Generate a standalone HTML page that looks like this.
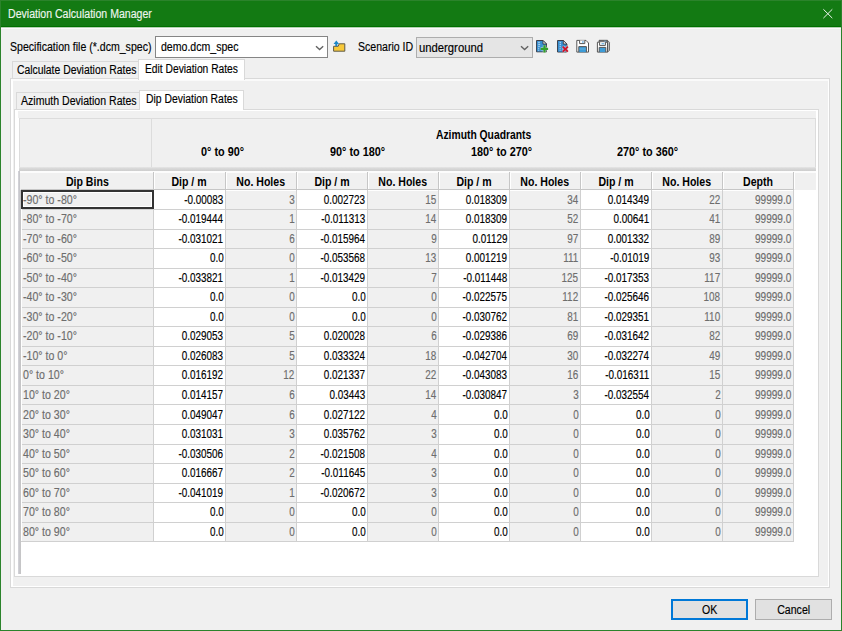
<!DOCTYPE html>
<html><head><meta charset="utf-8"><style>
*{box-sizing:border-box;margin:0;padding:0}
html,body{width:842px;height:631px;overflow:hidden;background:#f0f0f0;font-family:"Liberation Sans",sans-serif;font-size:12px;color:#000}
.a{position:absolute}
.t{display:inline-block;white-space:pre;transform:scaleX(.88);transform-origin:0 50%;-webkit-text-stroke:0.15px currentColor}
.tr{transform-origin:100% 50%}
.b .t{-webkit-text-stroke:0}
.sb .t{-webkit-text-stroke:0.45px #000}
.tc{transform-origin:50% 50%}
.b{font-weight:bold}
.cell{position:absolute;height:19px;line-height:19px;white-space:nowrap;overflow:visible}
</style></head><body>

<div class="a" style="left:0;top:0;width:842px;height:27px;background:#137a13"></div>
<div class="a" style="left:0;top:26px;width:842px;height:1px;background:#006f00"></div>
<div class="a" style="left:0;top:27px;width:842px;height:1px;background:#b4d2b4"></div>
<div class="a" style="left:0;top:28px;width:842px;height:1px;background:#fdf9fd"></div>
<div class="a" style="left:0;top:0;width:842px;height:1px;background:#2b832b"></div>
<div class="a" style="left:0;top:0;width:1px;height:631px;background:#2b832b"></div>
<div class="a" style="left:841px;top:0;width:1px;height:631px;background:#2b832b"></div>
<div class="a" style="left:0;top:630px;width:842px;height:1px;background:#2b832b"></div>
<div class="a" style="left:8px;top:6.4px;line-height:16px;color:#eef5ee"><span class="t">Deviation Calculation Manager</span></div>
<svg class="a" style="left:822px;top:8px" width="12" height="12"><path d="M1.4 1.3L10.3 10.1M10.3 1.3L1.4 10.1" stroke="#eef5ee" stroke-width="1" fill="none"/></svg>
<div class="a" style="left:9.5px;top:39.5px;line-height:15px"><span class="t">Specification file (*.dcm_spec)</span></div>
<div class="a" style="left:155px;top:36px;width:173px;height:22px;background:#fff;border:1px solid #858585"></div>
<div class="a" style="left:160.5px;top:40px;line-height:15px"><span class="t">demo.dcm_spec</span></div>
<svg class="a" style="left:315px;top:45px" width="10" height="7"><path d="M1 1.2L4.6 4.6L8.2 1.2" stroke="#626262" stroke-width="1.35" fill="none"/></svg>
<svg class="a" style="left:332px;top:39px" width="16" height="15">
<path d="M1.6 7.3H6.2L7.2 4.8H12.8V12.2H1.6Z" fill="#f8c93a" stroke="#5e5a48" stroke-width="1"/>
<path d="M4.3 1.4L7.1 4.9H5.3V7.3H3.3V4.9H1.5Z" fill="#1c86c6"/>
</svg>
<div class="a" style="left:357.5px;top:39.5px;line-height:15px"><span class="t">Scenario ID</span></div>
<div class="a" style="left:416px;top:37px;width:117px;height:21px;background:#e5e5e5;border:1px solid #adadad"></div>
<div class="a" style="left:419px;top:40.5px;line-height:15px"><span class="t" style="transform:scaleX(.94)">underground</span></div>
<svg class="a" style="left:520px;top:45px" width="10" height="7"><path d="M1 1.2L4.6 4.6L8.2 1.2" stroke="#626262" stroke-width="1.35" fill="none"/></svg>
<svg class="a" style="left:535px;top:39px" width="16" height="15">
<path d="M1.5 1.5H8L11.5 5V12.8H1.5Z" fill="#2c84c8" stroke="#3e3e46" stroke-width="1"/>
<path d="M1.9 2H7.6V12.3H1.9Z" fill="#3a8fd0"/>
<path d="M3.2 3.3h1.6M3.2 5.3h2M3.2 7.3h1.6M3.2 9.3h1M3.2 11.2h1" stroke="#bfe0f6" stroke-width="1"/>
<path d="M8 1.5V5H11.5Z" fill="#f4f4f4" stroke="#3e3e46" stroke-width="0.9" stroke-linejoin="round"/>
<path d="M9.5 6.3V13.4M5.7 9.8H13.1" stroke="#fff" stroke-width="3.6" opacity=".55"/>
<path d="M9.5 6.3V13.4M5.7 9.8H13.1" stroke="#34a02a" stroke-width="2.2"/>
</svg>
<svg class="a" style="left:556px;top:39px" width="16" height="15">
<path d="M1.5 1.5H7.3L10.9 5V13H1.5Z" fill="#2c84c8" stroke="#3e3e46" stroke-width="1"/>
<path d="M1.9 2H7V12.5H1.9Z" fill="#3a8fd0"/>
<path d="M3.6 3.3h1.4M3.6 5.3h1.4M3.6 7.3h1.2M3.6 9.3h1M3.6 11.2h1" stroke="#bfe0f6" stroke-width="1"/>
<path d="M7.3 1.5V5H10.9Z" fill="#f4f4f4" stroke="#3e3e46" stroke-width="0.9" stroke-linejoin="round"/>
<path d="M6.7 7.6L11.9 12.6M11.9 7.6L6.7 12.6" stroke="#fff" stroke-width="3.4" opacity=".5"/>
<path d="M6.7 7.6L11.9 12.6M11.9 7.6L6.7 12.6" stroke="#d0142a" stroke-width="1.9"/>
</svg>
<svg class="a" style="left:575px;top:39px" width="16" height="15">
<path d="M1.8 1.4H11L13.5 4V13.1H1.8Z" fill="#fff" stroke="#565656" stroke-width="1"/>
<path d="M4.6 1.4V4.6H9.8V1.4" fill="#fff" stroke="#565656" stroke-width="1"/>
<rect x="7" y="2.2" width="1.8" height="1.6" fill="#7dbbe6"/>
<path d="M3.8 13.1V7.6H11.4V13.1" fill="#3d9bd6" stroke="#565656" stroke-width="1"/>
<path d="M4.5 10H10.7" stroke="#68b4e4" stroke-width="0.9"/>
</svg>
<svg class="a" style="left:596px;top:39px" width="16" height="15">
<path d="M3 1.4H11.5L13.5 3.4V11.5L11.5 13.1V3.4Z" fill="#b8b8b8" stroke="#666" stroke-width="0.9" stroke-linejoin="round"/>
<path d="M3 1.4H11.5L11.5 3.2H3Z" fill="#9a9a9a" stroke="#555" stroke-width="0.8"/>
<rect x="8" y="1.8" width="2.2" height="1" fill="#7dbbe6"/>
<path d="M1.4 3.2H11.5V13.1H1.4Z" fill="#fff" stroke="#565656" stroke-width="1"/>
<path d="M3.6 3.2V6.4H9.4V3.2" fill="#fff" stroke="#565656" stroke-width="1"/>
<rect x="5.5" y="4" width="2.8" height="1.4" fill="#7dbbe6"/>
<path d="M3.2 13.1V8.4H9.8V13.1" fill="#3d9bd6" stroke="#565656" stroke-width="1"/>
</svg>
<div class="a" style="left:12px;top:61px;width:127px;height:19px;background:#f0f0f0;border:1px solid #d9d9d9;border-bottom:none"></div>
<div class="a" style="left:17px;top:63px;line-height:15px"><span class="t" style="transform:scaleX(.865)">Calculate Deviation Rates</span></div>
<div class="a" style="left:10px;top:78px;width:820px;height:510px;border:1px solid #d9d9d9;background:#f0f0f0"></div>
<div class="a" style="left:11px;top:79px;width:818px;height:508px;border-left:2px solid #fff;border-top:2px solid #fafafa;border-right:1px solid #fff;border-bottom:1px solid #fff"></div>
<div class="a" style="left:138px;top:59px;width:107px;height:21px;background:#fff;border:1px solid #d9d9d9;border-bottom:none"></div>
<div class="a" style="left:145px;top:62px;line-height:15px"><span class="t" style="transform:scaleX(.855)">Edit Deviation Rates</span></div>
<div class="a" style="left:16px;top:92px;width:124px;height:18px;background:#f0f0f0;border:1px solid #d9d9d9;border-bottom:none"></div>
<div class="a" style="left:21px;top:94px;line-height:15px"><span class="t">Azimuth Deviation Rates</span></div>
<div class="a" style="left:14px;top:109px;width:805px;height:468px;border:1px solid #d9d9d9;background:#f0f0f0"></div>
<div class="a" style="left:15px;top:110px;width:803px;height:466px;border-left:3px solid #fff;border-top:1px solid #fff;border-right:2px solid #fff"></div>
<div class="a" style="left:139px;top:90px;width:105px;height:20px;background:#fff;border:1px solid #d9d9d9;border-bottom:none"></div>
<div class="a" style="left:146px;top:92px;line-height:15px"><span class="t" style="transform:scaleX(.865)">Dip Deviation Rates</span></div>
<div class="a" style="left:17px;top:118px;width:801px;height:458px;background:#fff"></div>
<div class="a" style="left:19px;top:118px;width:797px;height:52px;background:#f0f0f0;border:1px solid #dcdcdc;border-bottom:none"></div>
<div class="a" style="left:151px;top:119px;width:1px;height:49px;background:#dcdcdc"></div>
<div class="a" style="left:19px;top:167px;width:797px;height:4px;background:linear-gradient(#e6e6e6,#d8d8d8 40%,#cdcdcd)"></div>
<div class="a b" style="left:436px;top:127.5px;line-height:15px"><span class="t" style="transform:scaleX(.86)">Azimuth Quadrants</span></div>
<div class="a b" style="left:201px;top:145px;line-height:15px"><span class="t" style="transform:scaleX(.905)">0° to 90°</span></div>
<div class="a b" style="left:330px;top:145px;line-height:15px"><span class="t" style="transform:scaleX(.905)">90° to 180°</span></div>
<div class="a b" style="left:471px;top:145px;line-height:15px"><span class="t" style="transform:scaleX(.905)">180° to 270°</span></div>
<div class="a b" style="left:617px;top:145px;line-height:15px"><span class="t" style="transform:scaleX(.905)">270° to 360°</span></div>
<div class="a" style="left:18px;top:171px;width:3px;height:403px;background:linear-gradient(90deg,#d6d6dc,#c8c8cc 50%,#c4c4c4)"></div>
<div class="a" style="left:20px;top:171px;width:796px;height:19px;background:#f0f0f0;border-top:2px solid #fcfcfc"></div>
<div class="a" style="left:21px;top:189px;width:773px;height:1px;background:#c6c6c6"></div>
<div class="a" style="left:153px;top:172px;width:1px;height:18px;background:#c6c6c6"></div>
<div class="a" style="left:154px;top:173px;width:1px;height:16px;background:#fff"></div>
<div class="a b" style="left:21px;width:132px;top:174px;line-height:16px;text-align:center"><span class="t tc">Dip Bins</span></div>
<div class="a" style="left:225px;top:172px;width:1px;height:18px;background:#c6c6c6"></div>
<div class="a" style="left:226px;top:173px;width:1px;height:16px;background:#fff"></div>
<div class="a b" style="left:154px;width:71px;top:174px;line-height:16px;text-align:center"><span class="t tc">Dip / m</span></div>
<div class="a" style="left:296px;top:172px;width:1px;height:18px;background:#c6c6c6"></div>
<div class="a" style="left:297px;top:173px;width:1px;height:16px;background:#fff"></div>
<div class="a b" style="left:226px;width:70px;top:174px;line-height:16px;text-align:center"><span class="t tc">No. Holes</span></div>
<div class="a" style="left:367px;top:172px;width:1px;height:18px;background:#c6c6c6"></div>
<div class="a" style="left:368px;top:173px;width:1px;height:16px;background:#fff"></div>
<div class="a b" style="left:297px;width:70px;top:174px;line-height:16px;text-align:center"><span class="t tc">Dip / m</span></div>
<div class="a" style="left:438px;top:172px;width:1px;height:18px;background:#c6c6c6"></div>
<div class="a" style="left:439px;top:173px;width:1px;height:16px;background:#fff"></div>
<div class="a b" style="left:368px;width:70px;top:174px;line-height:16px;text-align:center"><span class="t tc">No. Holes</span></div>
<div class="a" style="left:509px;top:172px;width:1px;height:18px;background:#c6c6c6"></div>
<div class="a" style="left:510px;top:173px;width:1px;height:16px;background:#fff"></div>
<div class="a b" style="left:439px;width:70px;top:174px;line-height:16px;text-align:center"><span class="t tc">Dip / m</span></div>
<div class="a" style="left:580px;top:172px;width:1px;height:18px;background:#c6c6c6"></div>
<div class="a" style="left:581px;top:173px;width:1px;height:16px;background:#fff"></div>
<div class="a b" style="left:510px;width:70px;top:174px;line-height:16px;text-align:center"><span class="t tc">No. Holes</span></div>
<div class="a" style="left:651px;top:172px;width:1px;height:18px;background:#c6c6c6"></div>
<div class="a" style="left:652px;top:173px;width:1px;height:16px;background:#fff"></div>
<div class="a b" style="left:581px;width:70px;top:174px;line-height:16px;text-align:center"><span class="t tc">Dip / m</span></div>
<div class="a" style="left:722px;top:172px;width:1px;height:18px;background:#c6c6c6"></div>
<div class="a" style="left:723px;top:173px;width:1px;height:16px;background:#fff"></div>
<div class="a b" style="left:652px;width:70px;top:174px;line-height:16px;text-align:center"><span class="t tc">No. Holes</span></div>
<div class="a" style="left:793px;top:172px;width:1px;height:18px;background:#c6c6c6"></div>
<div class="a" style="left:794px;top:173px;width:1px;height:16px;background:#fff"></div>
<div class="a b" style="left:723px;width:70px;top:174px;line-height:16px;text-align:center"><span class="t tc">Depth</span></div>
<div class="a" style="left:21px;top:190.5px;width:132px;height:19.54px;background:#f0f0f0"></div>
<div class="a" style="z-index:3;left:21px;top:192.6px;width:132px;line-height:15px;text-align:left;padding-left:1.8px;color:#6d6d6d"><span class="t tl" style="transform:scaleX(.885)">-90° to -80°</span></div>
<div class="a" style="left:154px;top:190.5px;width:71px;height:19.54px;background:#fff"></div>
<div class="a" style="z-index:3;left:154px;top:192.6px;width:71px;line-height:15px;text-align:right;padding-right:1.5px;color:#000"><span class="t tr" style="transform:scaleX(.825)">-0.00083</span></div>
<div class="a" style="left:226px;top:190.5px;width:70px;height:19.54px;background:#f0f0f0"></div>
<div class="a" style="z-index:3;left:226px;top:192.6px;width:70px;line-height:15px;text-align:right;padding-right:1.5px;color:#6d6d6d"><span class="t tr" style="transform:scaleX(.825)">3</span></div>
<div class="a" style="left:297px;top:190.5px;width:70px;height:19.54px;background:#fff"></div>
<div class="a" style="z-index:3;left:297px;top:192.6px;width:70px;line-height:15px;text-align:right;padding-right:1.5px;color:#000"><span class="t tr" style="transform:scaleX(.825)">0.002723</span></div>
<div class="a" style="left:368px;top:190.5px;width:70px;height:19.54px;background:#f0f0f0"></div>
<div class="a" style="z-index:3;left:368px;top:192.6px;width:70px;line-height:15px;text-align:right;padding-right:1.5px;color:#6d6d6d"><span class="t tr" style="transform:scaleX(.825)">15</span></div>
<div class="a" style="left:439px;top:190.5px;width:70px;height:19.54px;background:#fff"></div>
<div class="a" style="z-index:3;left:439px;top:192.6px;width:70px;line-height:15px;text-align:right;padding-right:1.5px;color:#000"><span class="t tr" style="transform:scaleX(.825)">0.018309</span></div>
<div class="a" style="left:510px;top:190.5px;width:70px;height:19.54px;background:#f0f0f0"></div>
<div class="a" style="z-index:3;left:510px;top:192.6px;width:70px;line-height:15px;text-align:right;padding-right:1.5px;color:#6d6d6d"><span class="t tr" style="transform:scaleX(.825)">34</span></div>
<div class="a" style="left:581px;top:190.5px;width:70px;height:19.54px;background:#fff"></div>
<div class="a" style="z-index:3;left:581px;top:192.6px;width:70px;line-height:15px;text-align:right;padding-right:1.5px;color:#000"><span class="t tr" style="transform:scaleX(.825)">0.014349</span></div>
<div class="a" style="left:652px;top:190.5px;width:70px;height:19.54px;background:#f0f0f0"></div>
<div class="a" style="z-index:3;left:652px;top:192.6px;width:70px;line-height:15px;text-align:right;padding-right:1.5px;color:#6d6d6d"><span class="t tr" style="transform:scaleX(.825)">22</span></div>
<div class="a" style="left:723px;top:190.5px;width:70px;height:19.54px;background:#f0f0f0"></div>
<div class="a" style="left:723px;top:192.6px;width:70px;line-height:15px;text-align:right;padding-right:2px;color:#6d6d6d"><span class="t tr" style="transform:scaleX(.84)">99999.0</span></div>
<div class="a" style="left:21px;top:209.04px;width:773px;height:1px;background:#d0d0d0"></div>
<div class="a" style="left:21px;top:210.04px;width:132px;height:19.54px;background:#f0f0f0"></div>
<div class="a" style="z-index:3;left:21px;top:212.14px;width:132px;line-height:15px;text-align:left;padding-left:1.8px;color:#6d6d6d"><span class="t tl" style="transform:scaleX(.885)">-80° to -70°</span></div>
<div class="a" style="left:154px;top:210.04px;width:71px;height:19.54px;background:#fff"></div>
<div class="a" style="z-index:3;left:154px;top:212.14px;width:71px;line-height:15px;text-align:right;padding-right:1.5px;color:#000"><span class="t tr" style="transform:scaleX(.825)">-0.019444</span></div>
<div class="a" style="left:226px;top:210.04px;width:70px;height:19.54px;background:#f0f0f0"></div>
<div class="a" style="z-index:3;left:226px;top:212.14px;width:70px;line-height:15px;text-align:right;padding-right:1.5px;color:#6d6d6d"><span class="t tr" style="transform:scaleX(.825)">1</span></div>
<div class="a" style="left:297px;top:210.04px;width:70px;height:19.54px;background:#fff"></div>
<div class="a" style="z-index:3;left:297px;top:212.14px;width:70px;line-height:15px;text-align:right;padding-right:1.5px;color:#000"><span class="t tr" style="transform:scaleX(.825)">-0.011313</span></div>
<div class="a" style="left:368px;top:210.04px;width:70px;height:19.54px;background:#f0f0f0"></div>
<div class="a" style="z-index:3;left:368px;top:212.14px;width:70px;line-height:15px;text-align:right;padding-right:1.5px;color:#6d6d6d"><span class="t tr" style="transform:scaleX(.825)">14</span></div>
<div class="a" style="left:439px;top:210.04px;width:70px;height:19.54px;background:#fff"></div>
<div class="a" style="z-index:3;left:439px;top:212.14px;width:70px;line-height:15px;text-align:right;padding-right:1.5px;color:#000"><span class="t tr" style="transform:scaleX(.825)">0.018309</span></div>
<div class="a" style="left:510px;top:210.04px;width:70px;height:19.54px;background:#f0f0f0"></div>
<div class="a" style="z-index:3;left:510px;top:212.14px;width:70px;line-height:15px;text-align:right;padding-right:1.5px;color:#6d6d6d"><span class="t tr" style="transform:scaleX(.825)">52</span></div>
<div class="a" style="left:581px;top:210.04px;width:70px;height:19.54px;background:#fff"></div>
<div class="a" style="z-index:3;left:581px;top:212.14px;width:70px;line-height:15px;text-align:right;padding-right:1.5px;color:#000"><span class="t tr" style="transform:scaleX(.825)">0.00641</span></div>
<div class="a" style="left:652px;top:210.04px;width:70px;height:19.54px;background:#f0f0f0"></div>
<div class="a" style="z-index:3;left:652px;top:212.14px;width:70px;line-height:15px;text-align:right;padding-right:1.5px;color:#6d6d6d"><span class="t tr" style="transform:scaleX(.825)">41</span></div>
<div class="a" style="left:723px;top:210.04px;width:70px;height:19.54px;background:#f0f0f0"></div>
<div class="a" style="left:723px;top:212.14px;width:70px;line-height:15px;text-align:right;padding-right:2px;color:#6d6d6d"><span class="t tr" style="transform:scaleX(.84)">99999.0</span></div>
<div class="a" style="left:21px;top:228.57999999999998px;width:773px;height:1px;background:#d0d0d0"></div>
<div class="a" style="left:21px;top:229.57999999999998px;width:132px;height:19.54px;background:#f0f0f0"></div>
<div class="a" style="z-index:3;left:21px;top:231.67999999999998px;width:132px;line-height:15px;text-align:left;padding-left:1.8px;color:#6d6d6d"><span class="t tl" style="transform:scaleX(.885)">-70° to -60°</span></div>
<div class="a" style="left:154px;top:229.57999999999998px;width:71px;height:19.54px;background:#fff"></div>
<div class="a" style="z-index:3;left:154px;top:231.67999999999998px;width:71px;line-height:15px;text-align:right;padding-right:1.5px;color:#000"><span class="t tr" style="transform:scaleX(.825)">-0.031021</span></div>
<div class="a" style="left:226px;top:229.57999999999998px;width:70px;height:19.54px;background:#f0f0f0"></div>
<div class="a" style="z-index:3;left:226px;top:231.67999999999998px;width:70px;line-height:15px;text-align:right;padding-right:1.5px;color:#6d6d6d"><span class="t tr" style="transform:scaleX(.825)">6</span></div>
<div class="a" style="left:297px;top:229.57999999999998px;width:70px;height:19.54px;background:#fff"></div>
<div class="a" style="z-index:3;left:297px;top:231.67999999999998px;width:70px;line-height:15px;text-align:right;padding-right:1.5px;color:#000"><span class="t tr" style="transform:scaleX(.825)">-0.015964</span></div>
<div class="a" style="left:368px;top:229.57999999999998px;width:70px;height:19.54px;background:#f0f0f0"></div>
<div class="a" style="z-index:3;left:368px;top:231.67999999999998px;width:70px;line-height:15px;text-align:right;padding-right:1.5px;color:#6d6d6d"><span class="t tr" style="transform:scaleX(.825)">9</span></div>
<div class="a" style="left:439px;top:229.57999999999998px;width:70px;height:19.54px;background:#fff"></div>
<div class="a" style="z-index:3;left:439px;top:231.67999999999998px;width:70px;line-height:15px;text-align:right;padding-right:1.5px;color:#000"><span class="t tr" style="transform:scaleX(.825)">0.01129</span></div>
<div class="a" style="left:510px;top:229.57999999999998px;width:70px;height:19.54px;background:#f0f0f0"></div>
<div class="a" style="z-index:3;left:510px;top:231.67999999999998px;width:70px;line-height:15px;text-align:right;padding-right:1.5px;color:#6d6d6d"><span class="t tr" style="transform:scaleX(.825)">97</span></div>
<div class="a" style="left:581px;top:229.57999999999998px;width:70px;height:19.54px;background:#fff"></div>
<div class="a" style="z-index:3;left:581px;top:231.67999999999998px;width:70px;line-height:15px;text-align:right;padding-right:1.5px;color:#000"><span class="t tr" style="transform:scaleX(.825)">0.001332</span></div>
<div class="a" style="left:652px;top:229.57999999999998px;width:70px;height:19.54px;background:#f0f0f0"></div>
<div class="a" style="z-index:3;left:652px;top:231.67999999999998px;width:70px;line-height:15px;text-align:right;padding-right:1.5px;color:#6d6d6d"><span class="t tr" style="transform:scaleX(.825)">89</span></div>
<div class="a" style="left:723px;top:229.57999999999998px;width:70px;height:19.54px;background:#f0f0f0"></div>
<div class="a" style="left:723px;top:231.67999999999998px;width:70px;line-height:15px;text-align:right;padding-right:2px;color:#6d6d6d"><span class="t tr" style="transform:scaleX(.84)">99999.0</span></div>
<div class="a" style="left:21px;top:248.12px;width:773px;height:1px;background:#d0d0d0"></div>
<div class="a" style="left:21px;top:249.12px;width:132px;height:19.54px;background:#f0f0f0"></div>
<div class="a" style="z-index:3;left:21px;top:251.22px;width:132px;line-height:15px;text-align:left;padding-left:1.8px;color:#6d6d6d"><span class="t tl" style="transform:scaleX(.885)">-60° to -50°</span></div>
<div class="a" style="left:154px;top:249.12px;width:71px;height:19.54px;background:#fff"></div>
<div class="a" style="z-index:3;left:154px;top:251.22px;width:71px;line-height:15px;text-align:right;padding-right:1.5px;color:#000"><span class="t tr" style="transform:scaleX(.825)">0.0</span></div>
<div class="a" style="left:226px;top:249.12px;width:70px;height:19.54px;background:#f0f0f0"></div>
<div class="a" style="z-index:3;left:226px;top:251.22px;width:70px;line-height:15px;text-align:right;padding-right:1.5px;color:#6d6d6d"><span class="t tr" style="transform:scaleX(.825)">0</span></div>
<div class="a" style="left:297px;top:249.12px;width:70px;height:19.54px;background:#fff"></div>
<div class="a" style="z-index:3;left:297px;top:251.22px;width:70px;line-height:15px;text-align:right;padding-right:1.5px;color:#000"><span class="t tr" style="transform:scaleX(.825)">-0.053568</span></div>
<div class="a" style="left:368px;top:249.12px;width:70px;height:19.54px;background:#f0f0f0"></div>
<div class="a" style="z-index:3;left:368px;top:251.22px;width:70px;line-height:15px;text-align:right;padding-right:1.5px;color:#6d6d6d"><span class="t tr" style="transform:scaleX(.825)">13</span></div>
<div class="a" style="left:439px;top:249.12px;width:70px;height:19.54px;background:#fff"></div>
<div class="a" style="z-index:3;left:439px;top:251.22px;width:70px;line-height:15px;text-align:right;padding-right:1.5px;color:#000"><span class="t tr" style="transform:scaleX(.825)">0.001219</span></div>
<div class="a" style="left:510px;top:249.12px;width:70px;height:19.54px;background:#f0f0f0"></div>
<div class="a" style="z-index:3;left:510px;top:251.22px;width:70px;line-height:15px;text-align:right;padding-right:1.5px;color:#6d6d6d"><span class="t tr" style="transform:scaleX(.825)">111</span></div>
<div class="a" style="left:581px;top:249.12px;width:70px;height:19.54px;background:#fff"></div>
<div class="a" style="z-index:3;left:581px;top:251.22px;width:70px;line-height:15px;text-align:right;padding-right:1.5px;color:#000"><span class="t tr" style="transform:scaleX(.825)">-0.01019</span></div>
<div class="a" style="left:652px;top:249.12px;width:70px;height:19.54px;background:#f0f0f0"></div>
<div class="a" style="z-index:3;left:652px;top:251.22px;width:70px;line-height:15px;text-align:right;padding-right:1.5px;color:#6d6d6d"><span class="t tr" style="transform:scaleX(.825)">93</span></div>
<div class="a" style="left:723px;top:249.12px;width:70px;height:19.54px;background:#f0f0f0"></div>
<div class="a" style="left:723px;top:251.22px;width:70px;line-height:15px;text-align:right;padding-right:2px;color:#6d6d6d"><span class="t tr" style="transform:scaleX(.84)">99999.0</span></div>
<div class="a" style="left:21px;top:267.65999999999997px;width:773px;height:1px;background:#d0d0d0"></div>
<div class="a" style="left:21px;top:268.65999999999997px;width:132px;height:19.54px;background:#f0f0f0"></div>
<div class="a" style="z-index:3;left:21px;top:270.76px;width:132px;line-height:15px;text-align:left;padding-left:1.8px;color:#6d6d6d"><span class="t tl" style="transform:scaleX(.885)">-50° to -40°</span></div>
<div class="a" style="left:154px;top:268.65999999999997px;width:71px;height:19.54px;background:#fff"></div>
<div class="a" style="z-index:3;left:154px;top:270.76px;width:71px;line-height:15px;text-align:right;padding-right:1.5px;color:#000"><span class="t tr" style="transform:scaleX(.825)">-0.033821</span></div>
<div class="a" style="left:226px;top:268.65999999999997px;width:70px;height:19.54px;background:#f0f0f0"></div>
<div class="a" style="z-index:3;left:226px;top:270.76px;width:70px;line-height:15px;text-align:right;padding-right:1.5px;color:#6d6d6d"><span class="t tr" style="transform:scaleX(.825)">1</span></div>
<div class="a" style="left:297px;top:268.65999999999997px;width:70px;height:19.54px;background:#fff"></div>
<div class="a" style="z-index:3;left:297px;top:270.76px;width:70px;line-height:15px;text-align:right;padding-right:1.5px;color:#000"><span class="t tr" style="transform:scaleX(.825)">-0.013429</span></div>
<div class="a" style="left:368px;top:268.65999999999997px;width:70px;height:19.54px;background:#f0f0f0"></div>
<div class="a" style="z-index:3;left:368px;top:270.76px;width:70px;line-height:15px;text-align:right;padding-right:1.5px;color:#6d6d6d"><span class="t tr" style="transform:scaleX(.825)">7</span></div>
<div class="a" style="left:439px;top:268.65999999999997px;width:70px;height:19.54px;background:#fff"></div>
<div class="a" style="z-index:3;left:439px;top:270.76px;width:70px;line-height:15px;text-align:right;padding-right:1.5px;color:#000"><span class="t tr" style="transform:scaleX(.825)">-0.011448</span></div>
<div class="a" style="left:510px;top:268.65999999999997px;width:70px;height:19.54px;background:#f0f0f0"></div>
<div class="a" style="z-index:3;left:510px;top:270.76px;width:70px;line-height:15px;text-align:right;padding-right:1.5px;color:#6d6d6d"><span class="t tr" style="transform:scaleX(.825)">125</span></div>
<div class="a" style="left:581px;top:268.65999999999997px;width:70px;height:19.54px;background:#fff"></div>
<div class="a" style="z-index:3;left:581px;top:270.76px;width:70px;line-height:15px;text-align:right;padding-right:1.5px;color:#000"><span class="t tr" style="transform:scaleX(.825)">-0.017353</span></div>
<div class="a" style="left:652px;top:268.65999999999997px;width:70px;height:19.54px;background:#f0f0f0"></div>
<div class="a" style="z-index:3;left:652px;top:270.76px;width:70px;line-height:15px;text-align:right;padding-right:1.5px;color:#6d6d6d"><span class="t tr" style="transform:scaleX(.825)">117</span></div>
<div class="a" style="left:723px;top:268.65999999999997px;width:70px;height:19.54px;background:#f0f0f0"></div>
<div class="a" style="left:723px;top:270.76px;width:70px;line-height:15px;text-align:right;padding-right:2px;color:#6d6d6d"><span class="t tr" style="transform:scaleX(.84)">99999.0</span></div>
<div class="a" style="left:21px;top:287.2px;width:773px;height:1px;background:#d0d0d0"></div>
<div class="a" style="left:21px;top:288.2px;width:132px;height:19.54px;background:#f0f0f0"></div>
<div class="a" style="z-index:3;left:21px;top:290.3px;width:132px;line-height:15px;text-align:left;padding-left:1.8px;color:#6d6d6d"><span class="t tl" style="transform:scaleX(.885)">-40° to -30°</span></div>
<div class="a" style="left:154px;top:288.2px;width:71px;height:19.54px;background:#fff"></div>
<div class="a" style="z-index:3;left:154px;top:290.3px;width:71px;line-height:15px;text-align:right;padding-right:1.5px;color:#000"><span class="t tr" style="transform:scaleX(.825)">0.0</span></div>
<div class="a" style="left:226px;top:288.2px;width:70px;height:19.54px;background:#f0f0f0"></div>
<div class="a" style="z-index:3;left:226px;top:290.3px;width:70px;line-height:15px;text-align:right;padding-right:1.5px;color:#6d6d6d"><span class="t tr" style="transform:scaleX(.825)">0</span></div>
<div class="a" style="left:297px;top:288.2px;width:70px;height:19.54px;background:#fff"></div>
<div class="a" style="z-index:3;left:297px;top:290.3px;width:70px;line-height:15px;text-align:right;padding-right:1.5px;color:#000"><span class="t tr" style="transform:scaleX(.825)">0.0</span></div>
<div class="a" style="left:368px;top:288.2px;width:70px;height:19.54px;background:#f0f0f0"></div>
<div class="a" style="z-index:3;left:368px;top:290.3px;width:70px;line-height:15px;text-align:right;padding-right:1.5px;color:#6d6d6d"><span class="t tr" style="transform:scaleX(.825)">0</span></div>
<div class="a" style="left:439px;top:288.2px;width:70px;height:19.54px;background:#fff"></div>
<div class="a" style="z-index:3;left:439px;top:290.3px;width:70px;line-height:15px;text-align:right;padding-right:1.5px;color:#000"><span class="t tr" style="transform:scaleX(.825)">-0.022575</span></div>
<div class="a" style="left:510px;top:288.2px;width:70px;height:19.54px;background:#f0f0f0"></div>
<div class="a" style="z-index:3;left:510px;top:290.3px;width:70px;line-height:15px;text-align:right;padding-right:1.5px;color:#6d6d6d"><span class="t tr" style="transform:scaleX(.825)">112</span></div>
<div class="a" style="left:581px;top:288.2px;width:70px;height:19.54px;background:#fff"></div>
<div class="a" style="z-index:3;left:581px;top:290.3px;width:70px;line-height:15px;text-align:right;padding-right:1.5px;color:#000"><span class="t tr" style="transform:scaleX(.825)">-0.025646</span></div>
<div class="a" style="left:652px;top:288.2px;width:70px;height:19.54px;background:#f0f0f0"></div>
<div class="a" style="z-index:3;left:652px;top:290.3px;width:70px;line-height:15px;text-align:right;padding-right:1.5px;color:#6d6d6d"><span class="t tr" style="transform:scaleX(.825)">108</span></div>
<div class="a" style="left:723px;top:288.2px;width:70px;height:19.54px;background:#f0f0f0"></div>
<div class="a" style="left:723px;top:290.3px;width:70px;line-height:15px;text-align:right;padding-right:2px;color:#6d6d6d"><span class="t tr" style="transform:scaleX(.84)">99999.0</span></div>
<div class="a" style="left:21px;top:306.74px;width:773px;height:1px;background:#d0d0d0"></div>
<div class="a" style="left:21px;top:307.74px;width:132px;height:19.54px;background:#f0f0f0"></div>
<div class="a" style="z-index:3;left:21px;top:309.84000000000003px;width:132px;line-height:15px;text-align:left;padding-left:1.8px;color:#6d6d6d"><span class="t tl" style="transform:scaleX(.885)">-30° to -20°</span></div>
<div class="a" style="left:154px;top:307.74px;width:71px;height:19.54px;background:#fff"></div>
<div class="a" style="z-index:3;left:154px;top:309.84000000000003px;width:71px;line-height:15px;text-align:right;padding-right:1.5px;color:#000"><span class="t tr" style="transform:scaleX(.825)">0.0</span></div>
<div class="a" style="left:226px;top:307.74px;width:70px;height:19.54px;background:#f0f0f0"></div>
<div class="a" style="z-index:3;left:226px;top:309.84000000000003px;width:70px;line-height:15px;text-align:right;padding-right:1.5px;color:#6d6d6d"><span class="t tr" style="transform:scaleX(.825)">0</span></div>
<div class="a" style="left:297px;top:307.74px;width:70px;height:19.54px;background:#fff"></div>
<div class="a" style="z-index:3;left:297px;top:309.84000000000003px;width:70px;line-height:15px;text-align:right;padding-right:1.5px;color:#000"><span class="t tr" style="transform:scaleX(.825)">0.0</span></div>
<div class="a" style="left:368px;top:307.74px;width:70px;height:19.54px;background:#f0f0f0"></div>
<div class="a" style="z-index:3;left:368px;top:309.84000000000003px;width:70px;line-height:15px;text-align:right;padding-right:1.5px;color:#6d6d6d"><span class="t tr" style="transform:scaleX(.825)">0</span></div>
<div class="a" style="left:439px;top:307.74px;width:70px;height:19.54px;background:#fff"></div>
<div class="a" style="z-index:3;left:439px;top:309.84000000000003px;width:70px;line-height:15px;text-align:right;padding-right:1.5px;color:#000"><span class="t tr" style="transform:scaleX(.825)">-0.030762</span></div>
<div class="a" style="left:510px;top:307.74px;width:70px;height:19.54px;background:#f0f0f0"></div>
<div class="a" style="z-index:3;left:510px;top:309.84000000000003px;width:70px;line-height:15px;text-align:right;padding-right:1.5px;color:#6d6d6d"><span class="t tr" style="transform:scaleX(.825)">81</span></div>
<div class="a" style="left:581px;top:307.74px;width:70px;height:19.54px;background:#fff"></div>
<div class="a" style="z-index:3;left:581px;top:309.84000000000003px;width:70px;line-height:15px;text-align:right;padding-right:1.5px;color:#000"><span class="t tr" style="transform:scaleX(.825)">-0.029351</span></div>
<div class="a" style="left:652px;top:307.74px;width:70px;height:19.54px;background:#f0f0f0"></div>
<div class="a" style="z-index:3;left:652px;top:309.84000000000003px;width:70px;line-height:15px;text-align:right;padding-right:1.5px;color:#6d6d6d"><span class="t tr" style="transform:scaleX(.825)">110</span></div>
<div class="a" style="left:723px;top:307.74px;width:70px;height:19.54px;background:#f0f0f0"></div>
<div class="a" style="left:723px;top:309.84000000000003px;width:70px;line-height:15px;text-align:right;padding-right:2px;color:#6d6d6d"><span class="t tr" style="transform:scaleX(.84)">99999.0</span></div>
<div class="a" style="left:21px;top:326.28px;width:773px;height:1px;background:#d0d0d0"></div>
<div class="a" style="left:21px;top:327.28px;width:132px;height:19.54px;background:#f0f0f0"></div>
<div class="a" style="z-index:3;left:21px;top:329.38px;width:132px;line-height:15px;text-align:left;padding-left:1.8px;color:#6d6d6d"><span class="t tl" style="transform:scaleX(.885)">-20° to -10°</span></div>
<div class="a" style="left:154px;top:327.28px;width:71px;height:19.54px;background:#fff"></div>
<div class="a" style="z-index:3;left:154px;top:329.38px;width:71px;line-height:15px;text-align:right;padding-right:1.5px;color:#000"><span class="t tr" style="transform:scaleX(.825)">0.029053</span></div>
<div class="a" style="left:226px;top:327.28px;width:70px;height:19.54px;background:#f0f0f0"></div>
<div class="a" style="z-index:3;left:226px;top:329.38px;width:70px;line-height:15px;text-align:right;padding-right:1.5px;color:#6d6d6d"><span class="t tr" style="transform:scaleX(.825)">5</span></div>
<div class="a" style="left:297px;top:327.28px;width:70px;height:19.54px;background:#fff"></div>
<div class="a" style="z-index:3;left:297px;top:329.38px;width:70px;line-height:15px;text-align:right;padding-right:1.5px;color:#000"><span class="t tr" style="transform:scaleX(.825)">0.020028</span></div>
<div class="a" style="left:368px;top:327.28px;width:70px;height:19.54px;background:#f0f0f0"></div>
<div class="a" style="z-index:3;left:368px;top:329.38px;width:70px;line-height:15px;text-align:right;padding-right:1.5px;color:#6d6d6d"><span class="t tr" style="transform:scaleX(.825)">6</span></div>
<div class="a" style="left:439px;top:327.28px;width:70px;height:19.54px;background:#fff"></div>
<div class="a" style="z-index:3;left:439px;top:329.38px;width:70px;line-height:15px;text-align:right;padding-right:1.5px;color:#000"><span class="t tr" style="transform:scaleX(.825)">-0.029386</span></div>
<div class="a" style="left:510px;top:327.28px;width:70px;height:19.54px;background:#f0f0f0"></div>
<div class="a" style="z-index:3;left:510px;top:329.38px;width:70px;line-height:15px;text-align:right;padding-right:1.5px;color:#6d6d6d"><span class="t tr" style="transform:scaleX(.825)">69</span></div>
<div class="a" style="left:581px;top:327.28px;width:70px;height:19.54px;background:#fff"></div>
<div class="a" style="z-index:3;left:581px;top:329.38px;width:70px;line-height:15px;text-align:right;padding-right:1.5px;color:#000"><span class="t tr" style="transform:scaleX(.825)">-0.031642</span></div>
<div class="a" style="left:652px;top:327.28px;width:70px;height:19.54px;background:#f0f0f0"></div>
<div class="a" style="z-index:3;left:652px;top:329.38px;width:70px;line-height:15px;text-align:right;padding-right:1.5px;color:#6d6d6d"><span class="t tr" style="transform:scaleX(.825)">82</span></div>
<div class="a" style="left:723px;top:327.28px;width:70px;height:19.54px;background:#f0f0f0"></div>
<div class="a" style="left:723px;top:329.38px;width:70px;line-height:15px;text-align:right;padding-right:2px;color:#6d6d6d"><span class="t tr" style="transform:scaleX(.84)">99999.0</span></div>
<div class="a" style="left:21px;top:345.82px;width:773px;height:1px;background:#d0d0d0"></div>
<div class="a" style="left:21px;top:346.82px;width:132px;height:19.54px;background:#f0f0f0"></div>
<div class="a" style="z-index:3;left:21px;top:348.92px;width:132px;line-height:15px;text-align:left;padding-left:1.8px;color:#6d6d6d"><span class="t tl" style="transform:scaleX(.885)">-10° to 0°</span></div>
<div class="a" style="left:154px;top:346.82px;width:71px;height:19.54px;background:#fff"></div>
<div class="a" style="z-index:3;left:154px;top:348.92px;width:71px;line-height:15px;text-align:right;padding-right:1.5px;color:#000"><span class="t tr" style="transform:scaleX(.825)">0.026083</span></div>
<div class="a" style="left:226px;top:346.82px;width:70px;height:19.54px;background:#f0f0f0"></div>
<div class="a" style="z-index:3;left:226px;top:348.92px;width:70px;line-height:15px;text-align:right;padding-right:1.5px;color:#6d6d6d"><span class="t tr" style="transform:scaleX(.825)">5</span></div>
<div class="a" style="left:297px;top:346.82px;width:70px;height:19.54px;background:#fff"></div>
<div class="a" style="z-index:3;left:297px;top:348.92px;width:70px;line-height:15px;text-align:right;padding-right:1.5px;color:#000"><span class="t tr" style="transform:scaleX(.825)">0.033324</span></div>
<div class="a" style="left:368px;top:346.82px;width:70px;height:19.54px;background:#f0f0f0"></div>
<div class="a" style="z-index:3;left:368px;top:348.92px;width:70px;line-height:15px;text-align:right;padding-right:1.5px;color:#6d6d6d"><span class="t tr" style="transform:scaleX(.825)">18</span></div>
<div class="a" style="left:439px;top:346.82px;width:70px;height:19.54px;background:#fff"></div>
<div class="a" style="z-index:3;left:439px;top:348.92px;width:70px;line-height:15px;text-align:right;padding-right:1.5px;color:#000"><span class="t tr" style="transform:scaleX(.825)">-0.042704</span></div>
<div class="a" style="left:510px;top:346.82px;width:70px;height:19.54px;background:#f0f0f0"></div>
<div class="a" style="z-index:3;left:510px;top:348.92px;width:70px;line-height:15px;text-align:right;padding-right:1.5px;color:#6d6d6d"><span class="t tr" style="transform:scaleX(.825)">30</span></div>
<div class="a" style="left:581px;top:346.82px;width:70px;height:19.54px;background:#fff"></div>
<div class="a" style="z-index:3;left:581px;top:348.92px;width:70px;line-height:15px;text-align:right;padding-right:1.5px;color:#000"><span class="t tr" style="transform:scaleX(.825)">-0.032274</span></div>
<div class="a" style="left:652px;top:346.82px;width:70px;height:19.54px;background:#f0f0f0"></div>
<div class="a" style="z-index:3;left:652px;top:348.92px;width:70px;line-height:15px;text-align:right;padding-right:1.5px;color:#6d6d6d"><span class="t tr" style="transform:scaleX(.825)">49</span></div>
<div class="a" style="left:723px;top:346.82px;width:70px;height:19.54px;background:#f0f0f0"></div>
<div class="a" style="left:723px;top:348.92px;width:70px;line-height:15px;text-align:right;padding-right:2px;color:#6d6d6d"><span class="t tr" style="transform:scaleX(.84)">99999.0</span></div>
<div class="a" style="left:21px;top:365.36px;width:773px;height:1px;background:#d0d0d0"></div>
<div class="a" style="left:21px;top:366.36px;width:132px;height:19.54px;background:#f0f0f0"></div>
<div class="a" style="z-index:3;left:21px;top:368.46000000000004px;width:132px;line-height:15px;text-align:left;padding-left:1.8px;color:#6d6d6d"><span class="t tl" style="transform:scaleX(.885)">0° to 10°</span></div>
<div class="a" style="left:154px;top:366.36px;width:71px;height:19.54px;background:#fff"></div>
<div class="a" style="z-index:3;left:154px;top:368.46000000000004px;width:71px;line-height:15px;text-align:right;padding-right:1.5px;color:#000"><span class="t tr" style="transform:scaleX(.825)">0.016192</span></div>
<div class="a" style="left:226px;top:366.36px;width:70px;height:19.54px;background:#f0f0f0"></div>
<div class="a" style="z-index:3;left:226px;top:368.46000000000004px;width:70px;line-height:15px;text-align:right;padding-right:1.5px;color:#6d6d6d"><span class="t tr" style="transform:scaleX(.825)">12</span></div>
<div class="a" style="left:297px;top:366.36px;width:70px;height:19.54px;background:#fff"></div>
<div class="a" style="z-index:3;left:297px;top:368.46000000000004px;width:70px;line-height:15px;text-align:right;padding-right:1.5px;color:#000"><span class="t tr" style="transform:scaleX(.825)">0.021337</span></div>
<div class="a" style="left:368px;top:366.36px;width:70px;height:19.54px;background:#f0f0f0"></div>
<div class="a" style="z-index:3;left:368px;top:368.46000000000004px;width:70px;line-height:15px;text-align:right;padding-right:1.5px;color:#6d6d6d"><span class="t tr" style="transform:scaleX(.825)">22</span></div>
<div class="a" style="left:439px;top:366.36px;width:70px;height:19.54px;background:#fff"></div>
<div class="a" style="z-index:3;left:439px;top:368.46000000000004px;width:70px;line-height:15px;text-align:right;padding-right:1.5px;color:#000"><span class="t tr" style="transform:scaleX(.825)">-0.043083</span></div>
<div class="a" style="left:510px;top:366.36px;width:70px;height:19.54px;background:#f0f0f0"></div>
<div class="a" style="z-index:3;left:510px;top:368.46000000000004px;width:70px;line-height:15px;text-align:right;padding-right:1.5px;color:#6d6d6d"><span class="t tr" style="transform:scaleX(.825)">16</span></div>
<div class="a" style="left:581px;top:366.36px;width:70px;height:19.54px;background:#fff"></div>
<div class="a" style="z-index:3;left:581px;top:368.46000000000004px;width:70px;line-height:15px;text-align:right;padding-right:1.5px;color:#000"><span class="t tr" style="transform:scaleX(.825)">-0.016311</span></div>
<div class="a" style="left:652px;top:366.36px;width:70px;height:19.54px;background:#f0f0f0"></div>
<div class="a" style="z-index:3;left:652px;top:368.46000000000004px;width:70px;line-height:15px;text-align:right;padding-right:1.5px;color:#6d6d6d"><span class="t tr" style="transform:scaleX(.825)">15</span></div>
<div class="a" style="left:723px;top:366.36px;width:70px;height:19.54px;background:#f0f0f0"></div>
<div class="a" style="left:723px;top:368.46000000000004px;width:70px;line-height:15px;text-align:right;padding-right:2px;color:#6d6d6d"><span class="t tr" style="transform:scaleX(.84)">99999.0</span></div>
<div class="a" style="left:21px;top:384.9px;width:773px;height:1px;background:#d0d0d0"></div>
<div class="a" style="left:21px;top:385.9px;width:132px;height:19.54px;background:#f0f0f0"></div>
<div class="a" style="z-index:3;left:21px;top:388.0px;width:132px;line-height:15px;text-align:left;padding-left:1.8px;color:#6d6d6d"><span class="t tl" style="transform:scaleX(.885)">10° to 20°</span></div>
<div class="a" style="left:154px;top:385.9px;width:71px;height:19.54px;background:#fff"></div>
<div class="a" style="z-index:3;left:154px;top:388.0px;width:71px;line-height:15px;text-align:right;padding-right:1.5px;color:#000"><span class="t tr" style="transform:scaleX(.825)">0.014157</span></div>
<div class="a" style="left:226px;top:385.9px;width:70px;height:19.54px;background:#f0f0f0"></div>
<div class="a" style="z-index:3;left:226px;top:388.0px;width:70px;line-height:15px;text-align:right;padding-right:1.5px;color:#6d6d6d"><span class="t tr" style="transform:scaleX(.825)">6</span></div>
<div class="a" style="left:297px;top:385.9px;width:70px;height:19.54px;background:#fff"></div>
<div class="a" style="z-index:3;left:297px;top:388.0px;width:70px;line-height:15px;text-align:right;padding-right:1.5px;color:#000"><span class="t tr" style="transform:scaleX(.825)">0.03443</span></div>
<div class="a" style="left:368px;top:385.9px;width:70px;height:19.54px;background:#f0f0f0"></div>
<div class="a" style="z-index:3;left:368px;top:388.0px;width:70px;line-height:15px;text-align:right;padding-right:1.5px;color:#6d6d6d"><span class="t tr" style="transform:scaleX(.825)">14</span></div>
<div class="a" style="left:439px;top:385.9px;width:70px;height:19.54px;background:#fff"></div>
<div class="a" style="z-index:3;left:439px;top:388.0px;width:70px;line-height:15px;text-align:right;padding-right:1.5px;color:#000"><span class="t tr" style="transform:scaleX(.825)">-0.030847</span></div>
<div class="a" style="left:510px;top:385.9px;width:70px;height:19.54px;background:#f0f0f0"></div>
<div class="a" style="z-index:3;left:510px;top:388.0px;width:70px;line-height:15px;text-align:right;padding-right:1.5px;color:#6d6d6d"><span class="t tr" style="transform:scaleX(.825)">3</span></div>
<div class="a" style="left:581px;top:385.9px;width:70px;height:19.54px;background:#fff"></div>
<div class="a" style="z-index:3;left:581px;top:388.0px;width:70px;line-height:15px;text-align:right;padding-right:1.5px;color:#000"><span class="t tr" style="transform:scaleX(.825)">-0.032554</span></div>
<div class="a" style="left:652px;top:385.9px;width:70px;height:19.54px;background:#f0f0f0"></div>
<div class="a" style="z-index:3;left:652px;top:388.0px;width:70px;line-height:15px;text-align:right;padding-right:1.5px;color:#6d6d6d"><span class="t tr" style="transform:scaleX(.825)">2</span></div>
<div class="a" style="left:723px;top:385.9px;width:70px;height:19.54px;background:#f0f0f0"></div>
<div class="a" style="left:723px;top:388.0px;width:70px;line-height:15px;text-align:right;padding-right:2px;color:#6d6d6d"><span class="t tr" style="transform:scaleX(.84)">99999.0</span></div>
<div class="a" style="left:21px;top:404.44px;width:773px;height:1px;background:#d0d0d0"></div>
<div class="a" style="left:21px;top:405.44px;width:132px;height:19.54px;background:#f0f0f0"></div>
<div class="a" style="z-index:3;left:21px;top:407.54px;width:132px;line-height:15px;text-align:left;padding-left:1.8px;color:#6d6d6d"><span class="t tl" style="transform:scaleX(.885)">20° to 30°</span></div>
<div class="a" style="left:154px;top:405.44px;width:71px;height:19.54px;background:#fff"></div>
<div class="a" style="z-index:3;left:154px;top:407.54px;width:71px;line-height:15px;text-align:right;padding-right:1.5px;color:#000"><span class="t tr" style="transform:scaleX(.825)">0.049047</span></div>
<div class="a" style="left:226px;top:405.44px;width:70px;height:19.54px;background:#f0f0f0"></div>
<div class="a" style="z-index:3;left:226px;top:407.54px;width:70px;line-height:15px;text-align:right;padding-right:1.5px;color:#6d6d6d"><span class="t tr" style="transform:scaleX(.825)">6</span></div>
<div class="a" style="left:297px;top:405.44px;width:70px;height:19.54px;background:#fff"></div>
<div class="a" style="z-index:3;left:297px;top:407.54px;width:70px;line-height:15px;text-align:right;padding-right:1.5px;color:#000"><span class="t tr" style="transform:scaleX(.825)">0.027122</span></div>
<div class="a" style="left:368px;top:405.44px;width:70px;height:19.54px;background:#f0f0f0"></div>
<div class="a" style="z-index:3;left:368px;top:407.54px;width:70px;line-height:15px;text-align:right;padding-right:1.5px;color:#6d6d6d"><span class="t tr" style="transform:scaleX(.825)">4</span></div>
<div class="a" style="left:439px;top:405.44px;width:70px;height:19.54px;background:#fff"></div>
<div class="a" style="z-index:3;left:439px;top:407.54px;width:70px;line-height:15px;text-align:right;padding-right:1.5px;color:#000"><span class="t tr" style="transform:scaleX(.825)">0.0</span></div>
<div class="a" style="left:510px;top:405.44px;width:70px;height:19.54px;background:#f0f0f0"></div>
<div class="a" style="z-index:3;left:510px;top:407.54px;width:70px;line-height:15px;text-align:right;padding-right:1.5px;color:#6d6d6d"><span class="t tr" style="transform:scaleX(.825)">0</span></div>
<div class="a" style="left:581px;top:405.44px;width:70px;height:19.54px;background:#fff"></div>
<div class="a" style="z-index:3;left:581px;top:407.54px;width:70px;line-height:15px;text-align:right;padding-right:1.5px;color:#000"><span class="t tr" style="transform:scaleX(.825)">0.0</span></div>
<div class="a" style="left:652px;top:405.44px;width:70px;height:19.54px;background:#f0f0f0"></div>
<div class="a" style="z-index:3;left:652px;top:407.54px;width:70px;line-height:15px;text-align:right;padding-right:1.5px;color:#6d6d6d"><span class="t tr" style="transform:scaleX(.825)">0</span></div>
<div class="a" style="left:723px;top:405.44px;width:70px;height:19.54px;background:#f0f0f0"></div>
<div class="a" style="left:723px;top:407.54px;width:70px;line-height:15px;text-align:right;padding-right:2px;color:#6d6d6d"><span class="t tr" style="transform:scaleX(.84)">99999.0</span></div>
<div class="a" style="left:21px;top:423.98px;width:773px;height:1px;background:#d0d0d0"></div>
<div class="a" style="left:21px;top:424.98px;width:132px;height:19.54px;background:#f0f0f0"></div>
<div class="a" style="z-index:3;left:21px;top:427.08000000000004px;width:132px;line-height:15px;text-align:left;padding-left:1.8px;color:#6d6d6d"><span class="t tl" style="transform:scaleX(.885)">30° to 40°</span></div>
<div class="a" style="left:154px;top:424.98px;width:71px;height:19.54px;background:#fff"></div>
<div class="a" style="z-index:3;left:154px;top:427.08000000000004px;width:71px;line-height:15px;text-align:right;padding-right:1.5px;color:#000"><span class="t tr" style="transform:scaleX(.825)">0.031031</span></div>
<div class="a" style="left:226px;top:424.98px;width:70px;height:19.54px;background:#f0f0f0"></div>
<div class="a" style="z-index:3;left:226px;top:427.08000000000004px;width:70px;line-height:15px;text-align:right;padding-right:1.5px;color:#6d6d6d"><span class="t tr" style="transform:scaleX(.825)">3</span></div>
<div class="a" style="left:297px;top:424.98px;width:70px;height:19.54px;background:#fff"></div>
<div class="a" style="z-index:3;left:297px;top:427.08000000000004px;width:70px;line-height:15px;text-align:right;padding-right:1.5px;color:#000"><span class="t tr" style="transform:scaleX(.825)">0.035762</span></div>
<div class="a" style="left:368px;top:424.98px;width:70px;height:19.54px;background:#f0f0f0"></div>
<div class="a" style="z-index:3;left:368px;top:427.08000000000004px;width:70px;line-height:15px;text-align:right;padding-right:1.5px;color:#6d6d6d"><span class="t tr" style="transform:scaleX(.825)">3</span></div>
<div class="a" style="left:439px;top:424.98px;width:70px;height:19.54px;background:#fff"></div>
<div class="a" style="z-index:3;left:439px;top:427.08000000000004px;width:70px;line-height:15px;text-align:right;padding-right:1.5px;color:#000"><span class="t tr" style="transform:scaleX(.825)">0.0</span></div>
<div class="a" style="left:510px;top:424.98px;width:70px;height:19.54px;background:#f0f0f0"></div>
<div class="a" style="z-index:3;left:510px;top:427.08000000000004px;width:70px;line-height:15px;text-align:right;padding-right:1.5px;color:#6d6d6d"><span class="t tr" style="transform:scaleX(.825)">0</span></div>
<div class="a" style="left:581px;top:424.98px;width:70px;height:19.54px;background:#fff"></div>
<div class="a" style="z-index:3;left:581px;top:427.08000000000004px;width:70px;line-height:15px;text-align:right;padding-right:1.5px;color:#000"><span class="t tr" style="transform:scaleX(.825)">0.0</span></div>
<div class="a" style="left:652px;top:424.98px;width:70px;height:19.54px;background:#f0f0f0"></div>
<div class="a" style="z-index:3;left:652px;top:427.08000000000004px;width:70px;line-height:15px;text-align:right;padding-right:1.5px;color:#6d6d6d"><span class="t tr" style="transform:scaleX(.825)">0</span></div>
<div class="a" style="left:723px;top:424.98px;width:70px;height:19.54px;background:#f0f0f0"></div>
<div class="a" style="left:723px;top:427.08000000000004px;width:70px;line-height:15px;text-align:right;padding-right:2px;color:#6d6d6d"><span class="t tr" style="transform:scaleX(.84)">99999.0</span></div>
<div class="a" style="left:21px;top:443.52px;width:773px;height:1px;background:#d0d0d0"></div>
<div class="a" style="left:21px;top:444.52px;width:132px;height:19.54px;background:#f0f0f0"></div>
<div class="a" style="z-index:3;left:21px;top:446.62px;width:132px;line-height:15px;text-align:left;padding-left:1.8px;color:#6d6d6d"><span class="t tl" style="transform:scaleX(.885)">40° to 50°</span></div>
<div class="a" style="left:154px;top:444.52px;width:71px;height:19.54px;background:#fff"></div>
<div class="a" style="z-index:3;left:154px;top:446.62px;width:71px;line-height:15px;text-align:right;padding-right:1.5px;color:#000"><span class="t tr" style="transform:scaleX(.825)">-0.030506</span></div>
<div class="a" style="left:226px;top:444.52px;width:70px;height:19.54px;background:#f0f0f0"></div>
<div class="a" style="z-index:3;left:226px;top:446.62px;width:70px;line-height:15px;text-align:right;padding-right:1.5px;color:#6d6d6d"><span class="t tr" style="transform:scaleX(.825)">2</span></div>
<div class="a" style="left:297px;top:444.52px;width:70px;height:19.54px;background:#fff"></div>
<div class="a" style="z-index:3;left:297px;top:446.62px;width:70px;line-height:15px;text-align:right;padding-right:1.5px;color:#000"><span class="t tr" style="transform:scaleX(.825)">-0.021508</span></div>
<div class="a" style="left:368px;top:444.52px;width:70px;height:19.54px;background:#f0f0f0"></div>
<div class="a" style="z-index:3;left:368px;top:446.62px;width:70px;line-height:15px;text-align:right;padding-right:1.5px;color:#6d6d6d"><span class="t tr" style="transform:scaleX(.825)">4</span></div>
<div class="a" style="left:439px;top:444.52px;width:70px;height:19.54px;background:#fff"></div>
<div class="a" style="z-index:3;left:439px;top:446.62px;width:70px;line-height:15px;text-align:right;padding-right:1.5px;color:#000"><span class="t tr" style="transform:scaleX(.825)">0.0</span></div>
<div class="a" style="left:510px;top:444.52px;width:70px;height:19.54px;background:#f0f0f0"></div>
<div class="a" style="z-index:3;left:510px;top:446.62px;width:70px;line-height:15px;text-align:right;padding-right:1.5px;color:#6d6d6d"><span class="t tr" style="transform:scaleX(.825)">0</span></div>
<div class="a" style="left:581px;top:444.52px;width:70px;height:19.54px;background:#fff"></div>
<div class="a" style="z-index:3;left:581px;top:446.62px;width:70px;line-height:15px;text-align:right;padding-right:1.5px;color:#000"><span class="t tr" style="transform:scaleX(.825)">0.0</span></div>
<div class="a" style="left:652px;top:444.52px;width:70px;height:19.54px;background:#f0f0f0"></div>
<div class="a" style="z-index:3;left:652px;top:446.62px;width:70px;line-height:15px;text-align:right;padding-right:1.5px;color:#6d6d6d"><span class="t tr" style="transform:scaleX(.825)">0</span></div>
<div class="a" style="left:723px;top:444.52px;width:70px;height:19.54px;background:#f0f0f0"></div>
<div class="a" style="left:723px;top:446.62px;width:70px;line-height:15px;text-align:right;padding-right:2px;color:#6d6d6d"><span class="t tr" style="transform:scaleX(.84)">99999.0</span></div>
<div class="a" style="left:21px;top:463.06px;width:773px;height:1px;background:#d0d0d0"></div>
<div class="a" style="left:21px;top:464.06px;width:132px;height:19.54px;background:#f0f0f0"></div>
<div class="a" style="z-index:3;left:21px;top:466.16px;width:132px;line-height:15px;text-align:left;padding-left:1.8px;color:#6d6d6d"><span class="t tl" style="transform:scaleX(.885)">50° to 60°</span></div>
<div class="a" style="left:154px;top:464.06px;width:71px;height:19.54px;background:#fff"></div>
<div class="a" style="z-index:3;left:154px;top:466.16px;width:71px;line-height:15px;text-align:right;padding-right:1.5px;color:#000"><span class="t tr" style="transform:scaleX(.825)">0.016667</span></div>
<div class="a" style="left:226px;top:464.06px;width:70px;height:19.54px;background:#f0f0f0"></div>
<div class="a" style="z-index:3;left:226px;top:466.16px;width:70px;line-height:15px;text-align:right;padding-right:1.5px;color:#6d6d6d"><span class="t tr" style="transform:scaleX(.825)">2</span></div>
<div class="a" style="left:297px;top:464.06px;width:70px;height:19.54px;background:#fff"></div>
<div class="a" style="z-index:3;left:297px;top:466.16px;width:70px;line-height:15px;text-align:right;padding-right:1.5px;color:#000"><span class="t tr" style="transform:scaleX(.825)">-0.011645</span></div>
<div class="a" style="left:368px;top:464.06px;width:70px;height:19.54px;background:#f0f0f0"></div>
<div class="a" style="z-index:3;left:368px;top:466.16px;width:70px;line-height:15px;text-align:right;padding-right:1.5px;color:#6d6d6d"><span class="t tr" style="transform:scaleX(.825)">3</span></div>
<div class="a" style="left:439px;top:464.06px;width:70px;height:19.54px;background:#fff"></div>
<div class="a" style="z-index:3;left:439px;top:466.16px;width:70px;line-height:15px;text-align:right;padding-right:1.5px;color:#000"><span class="t tr" style="transform:scaleX(.825)">0.0</span></div>
<div class="a" style="left:510px;top:464.06px;width:70px;height:19.54px;background:#f0f0f0"></div>
<div class="a" style="z-index:3;left:510px;top:466.16px;width:70px;line-height:15px;text-align:right;padding-right:1.5px;color:#6d6d6d"><span class="t tr" style="transform:scaleX(.825)">0</span></div>
<div class="a" style="left:581px;top:464.06px;width:70px;height:19.54px;background:#fff"></div>
<div class="a" style="z-index:3;left:581px;top:466.16px;width:70px;line-height:15px;text-align:right;padding-right:1.5px;color:#000"><span class="t tr" style="transform:scaleX(.825)">0.0</span></div>
<div class="a" style="left:652px;top:464.06px;width:70px;height:19.54px;background:#f0f0f0"></div>
<div class="a" style="z-index:3;left:652px;top:466.16px;width:70px;line-height:15px;text-align:right;padding-right:1.5px;color:#6d6d6d"><span class="t tr" style="transform:scaleX(.825)">0</span></div>
<div class="a" style="left:723px;top:464.06px;width:70px;height:19.54px;background:#f0f0f0"></div>
<div class="a" style="left:723px;top:466.16px;width:70px;line-height:15px;text-align:right;padding-right:2px;color:#6d6d6d"><span class="t tr" style="transform:scaleX(.84)">99999.0</span></div>
<div class="a" style="left:21px;top:482.59999999999997px;width:773px;height:1px;background:#d0d0d0"></div>
<div class="a" style="left:21px;top:483.59999999999997px;width:132px;height:19.54px;background:#f0f0f0"></div>
<div class="a" style="z-index:3;left:21px;top:485.7px;width:132px;line-height:15px;text-align:left;padding-left:1.8px;color:#6d6d6d"><span class="t tl" style="transform:scaleX(.885)">60° to 70°</span></div>
<div class="a" style="left:154px;top:483.59999999999997px;width:71px;height:19.54px;background:#fff"></div>
<div class="a" style="z-index:3;left:154px;top:485.7px;width:71px;line-height:15px;text-align:right;padding-right:1.5px;color:#000"><span class="t tr" style="transform:scaleX(.825)">-0.041019</span></div>
<div class="a" style="left:226px;top:483.59999999999997px;width:70px;height:19.54px;background:#f0f0f0"></div>
<div class="a" style="z-index:3;left:226px;top:485.7px;width:70px;line-height:15px;text-align:right;padding-right:1.5px;color:#6d6d6d"><span class="t tr" style="transform:scaleX(.825)">1</span></div>
<div class="a" style="left:297px;top:483.59999999999997px;width:70px;height:19.54px;background:#fff"></div>
<div class="a" style="z-index:3;left:297px;top:485.7px;width:70px;line-height:15px;text-align:right;padding-right:1.5px;color:#000"><span class="t tr" style="transform:scaleX(.825)">-0.020672</span></div>
<div class="a" style="left:368px;top:483.59999999999997px;width:70px;height:19.54px;background:#f0f0f0"></div>
<div class="a" style="z-index:3;left:368px;top:485.7px;width:70px;line-height:15px;text-align:right;padding-right:1.5px;color:#6d6d6d"><span class="t tr" style="transform:scaleX(.825)">3</span></div>
<div class="a" style="left:439px;top:483.59999999999997px;width:70px;height:19.54px;background:#fff"></div>
<div class="a" style="z-index:3;left:439px;top:485.7px;width:70px;line-height:15px;text-align:right;padding-right:1.5px;color:#000"><span class="t tr" style="transform:scaleX(.825)">0.0</span></div>
<div class="a" style="left:510px;top:483.59999999999997px;width:70px;height:19.54px;background:#f0f0f0"></div>
<div class="a" style="z-index:3;left:510px;top:485.7px;width:70px;line-height:15px;text-align:right;padding-right:1.5px;color:#6d6d6d"><span class="t tr" style="transform:scaleX(.825)">0</span></div>
<div class="a" style="left:581px;top:483.59999999999997px;width:70px;height:19.54px;background:#fff"></div>
<div class="a" style="z-index:3;left:581px;top:485.7px;width:70px;line-height:15px;text-align:right;padding-right:1.5px;color:#000"><span class="t tr" style="transform:scaleX(.825)">0.0</span></div>
<div class="a" style="left:652px;top:483.59999999999997px;width:70px;height:19.54px;background:#f0f0f0"></div>
<div class="a" style="z-index:3;left:652px;top:485.7px;width:70px;line-height:15px;text-align:right;padding-right:1.5px;color:#6d6d6d"><span class="t tr" style="transform:scaleX(.825)">0</span></div>
<div class="a" style="left:723px;top:483.59999999999997px;width:70px;height:19.54px;background:#f0f0f0"></div>
<div class="a" style="left:723px;top:485.7px;width:70px;line-height:15px;text-align:right;padding-right:2px;color:#6d6d6d"><span class="t tr" style="transform:scaleX(.84)">99999.0</span></div>
<div class="a" style="left:21px;top:502.14px;width:773px;height:1px;background:#d0d0d0"></div>
<div class="a" style="left:21px;top:503.14px;width:132px;height:19.54px;background:#f0f0f0"></div>
<div class="a" style="z-index:3;left:21px;top:505.24px;width:132px;line-height:15px;text-align:left;padding-left:1.8px;color:#6d6d6d"><span class="t tl" style="transform:scaleX(.885)">70° to 80°</span></div>
<div class="a" style="left:154px;top:503.14px;width:71px;height:19.54px;background:#fff"></div>
<div class="a" style="z-index:3;left:154px;top:505.24px;width:71px;line-height:15px;text-align:right;padding-right:1.5px;color:#000"><span class="t tr" style="transform:scaleX(.825)">0.0</span></div>
<div class="a" style="left:226px;top:503.14px;width:70px;height:19.54px;background:#f0f0f0"></div>
<div class="a" style="z-index:3;left:226px;top:505.24px;width:70px;line-height:15px;text-align:right;padding-right:1.5px;color:#6d6d6d"><span class="t tr" style="transform:scaleX(.825)">0</span></div>
<div class="a" style="left:297px;top:503.14px;width:70px;height:19.54px;background:#fff"></div>
<div class="a" style="z-index:3;left:297px;top:505.24px;width:70px;line-height:15px;text-align:right;padding-right:1.5px;color:#000"><span class="t tr" style="transform:scaleX(.825)">0.0</span></div>
<div class="a" style="left:368px;top:503.14px;width:70px;height:19.54px;background:#f0f0f0"></div>
<div class="a" style="z-index:3;left:368px;top:505.24px;width:70px;line-height:15px;text-align:right;padding-right:1.5px;color:#6d6d6d"><span class="t tr" style="transform:scaleX(.825)">0</span></div>
<div class="a" style="left:439px;top:503.14px;width:70px;height:19.54px;background:#fff"></div>
<div class="a" style="z-index:3;left:439px;top:505.24px;width:70px;line-height:15px;text-align:right;padding-right:1.5px;color:#000"><span class="t tr" style="transform:scaleX(.825)">0.0</span></div>
<div class="a" style="left:510px;top:503.14px;width:70px;height:19.54px;background:#f0f0f0"></div>
<div class="a" style="z-index:3;left:510px;top:505.24px;width:70px;line-height:15px;text-align:right;padding-right:1.5px;color:#6d6d6d"><span class="t tr" style="transform:scaleX(.825)">0</span></div>
<div class="a" style="left:581px;top:503.14px;width:70px;height:19.54px;background:#fff"></div>
<div class="a" style="z-index:3;left:581px;top:505.24px;width:70px;line-height:15px;text-align:right;padding-right:1.5px;color:#000"><span class="t tr" style="transform:scaleX(.825)">0.0</span></div>
<div class="a" style="left:652px;top:503.14px;width:70px;height:19.54px;background:#f0f0f0"></div>
<div class="a" style="z-index:3;left:652px;top:505.24px;width:70px;line-height:15px;text-align:right;padding-right:1.5px;color:#6d6d6d"><span class="t tr" style="transform:scaleX(.825)">0</span></div>
<div class="a" style="left:723px;top:503.14px;width:70px;height:19.54px;background:#f0f0f0"></div>
<div class="a" style="left:723px;top:505.24px;width:70px;line-height:15px;text-align:right;padding-right:2px;color:#6d6d6d"><span class="t tr" style="transform:scaleX(.84)">99999.0</span></div>
<div class="a" style="left:21px;top:521.6800000000001px;width:773px;height:1px;background:#d0d0d0"></div>
<div class="a" style="left:21px;top:522.6800000000001px;width:132px;height:19.54px;background:#f0f0f0"></div>
<div class="a" style="z-index:3;left:21px;top:524.7800000000001px;width:132px;line-height:15px;text-align:left;padding-left:1.8px;color:#6d6d6d"><span class="t tl" style="transform:scaleX(.885)">80° to 90°</span></div>
<div class="a" style="left:154px;top:522.6800000000001px;width:71px;height:19.54px;background:#fff"></div>
<div class="a" style="z-index:3;left:154px;top:524.7800000000001px;width:71px;line-height:15px;text-align:right;padding-right:1.5px;color:#000"><span class="t tr" style="transform:scaleX(.825)">0.0</span></div>
<div class="a" style="left:226px;top:522.6800000000001px;width:70px;height:19.54px;background:#f0f0f0"></div>
<div class="a" style="z-index:3;left:226px;top:524.7800000000001px;width:70px;line-height:15px;text-align:right;padding-right:1.5px;color:#6d6d6d"><span class="t tr" style="transform:scaleX(.825)">0</span></div>
<div class="a" style="left:297px;top:522.6800000000001px;width:70px;height:19.54px;background:#fff"></div>
<div class="a" style="z-index:3;left:297px;top:524.7800000000001px;width:70px;line-height:15px;text-align:right;padding-right:1.5px;color:#000"><span class="t tr" style="transform:scaleX(.825)">0.0</span></div>
<div class="a" style="left:368px;top:522.6800000000001px;width:70px;height:19.54px;background:#f0f0f0"></div>
<div class="a" style="z-index:3;left:368px;top:524.7800000000001px;width:70px;line-height:15px;text-align:right;padding-right:1.5px;color:#6d6d6d"><span class="t tr" style="transform:scaleX(.825)">0</span></div>
<div class="a" style="left:439px;top:522.6800000000001px;width:70px;height:19.54px;background:#fff"></div>
<div class="a" style="z-index:3;left:439px;top:524.7800000000001px;width:70px;line-height:15px;text-align:right;padding-right:1.5px;color:#000"><span class="t tr" style="transform:scaleX(.825)">0.0</span></div>
<div class="a" style="left:510px;top:522.6800000000001px;width:70px;height:19.54px;background:#f0f0f0"></div>
<div class="a" style="z-index:3;left:510px;top:524.7800000000001px;width:70px;line-height:15px;text-align:right;padding-right:1.5px;color:#6d6d6d"><span class="t tr" style="transform:scaleX(.825)">0</span></div>
<div class="a" style="left:581px;top:522.6800000000001px;width:70px;height:19.54px;background:#fff"></div>
<div class="a" style="z-index:3;left:581px;top:524.7800000000001px;width:70px;line-height:15px;text-align:right;padding-right:1.5px;color:#000"><span class="t tr" style="transform:scaleX(.825)">0.0</span></div>
<div class="a" style="left:652px;top:522.6800000000001px;width:70px;height:19.54px;background:#f0f0f0"></div>
<div class="a" style="z-index:3;left:652px;top:524.7800000000001px;width:70px;line-height:15px;text-align:right;padding-right:1.5px;color:#6d6d6d"><span class="t tr" style="transform:scaleX(.825)">0</span></div>
<div class="a" style="left:723px;top:522.6800000000001px;width:70px;height:19.54px;background:#f0f0f0"></div>
<div class="a" style="left:723px;top:524.7800000000001px;width:70px;line-height:15px;text-align:right;padding-right:2px;color:#6d6d6d"><span class="t tr" style="transform:scaleX(.84)">99999.0</span></div>
<div class="a" style="left:21px;top:541.22px;width:773px;height:1px;background:#d0d0d0"></div>
<div class="a" style="left:153px;top:190px;width:1px;height:351px;background:#d0d0d0"></div>
<div class="a" style="left:225px;top:190px;width:1px;height:351px;background:#d0d0d0"></div>
<div class="a" style="left:296px;top:190px;width:1px;height:351px;background:#d0d0d0"></div>
<div class="a" style="left:367px;top:190px;width:1px;height:351px;background:#d0d0d0"></div>
<div class="a" style="left:438px;top:190px;width:1px;height:351px;background:#d0d0d0"></div>
<div class="a" style="left:509px;top:190px;width:1px;height:351px;background:#d0d0d0"></div>
<div class="a" style="left:580px;top:190px;width:1px;height:351px;background:#d0d0d0"></div>
<div class="a" style="left:651px;top:190px;width:1px;height:351px;background:#d0d0d0"></div>
<div class="a" style="left:722px;top:190px;width:1px;height:351px;background:#d0d0d0"></div>
<div class="a" style="left:793px;top:190px;width:1px;height:351px;background:#d0d0d0"></div>
<div class="a" style="left:21px;top:190px;width:1px;height:351px;background:#fff"></div>
<div class="a" style="z-index:2;left:21px;top:190px;width:133px;height:19px;border:2px solid #333;box-shadow:inset 0 0 0 1px #fff"></div>
<div class="a" style="left:671px;top:599px;width:77px;height:21px;background:#e1e1e1;border:2px solid #0078d7"></div>
<div class="a" style="left:671px;top:602px;width:77px;line-height:17px;text-align:center"><span class="t tc">OK</span></div>
<div class="a" style="left:755px;top:599px;width:77px;height:21px;background:#e1e1e1;border:1px solid #adadad"></div>
<div class="a" style="left:755px;top:602px;width:77px;line-height:17px;text-align:center"><span class="t tc">Cancel</span></div>
</body></html>
